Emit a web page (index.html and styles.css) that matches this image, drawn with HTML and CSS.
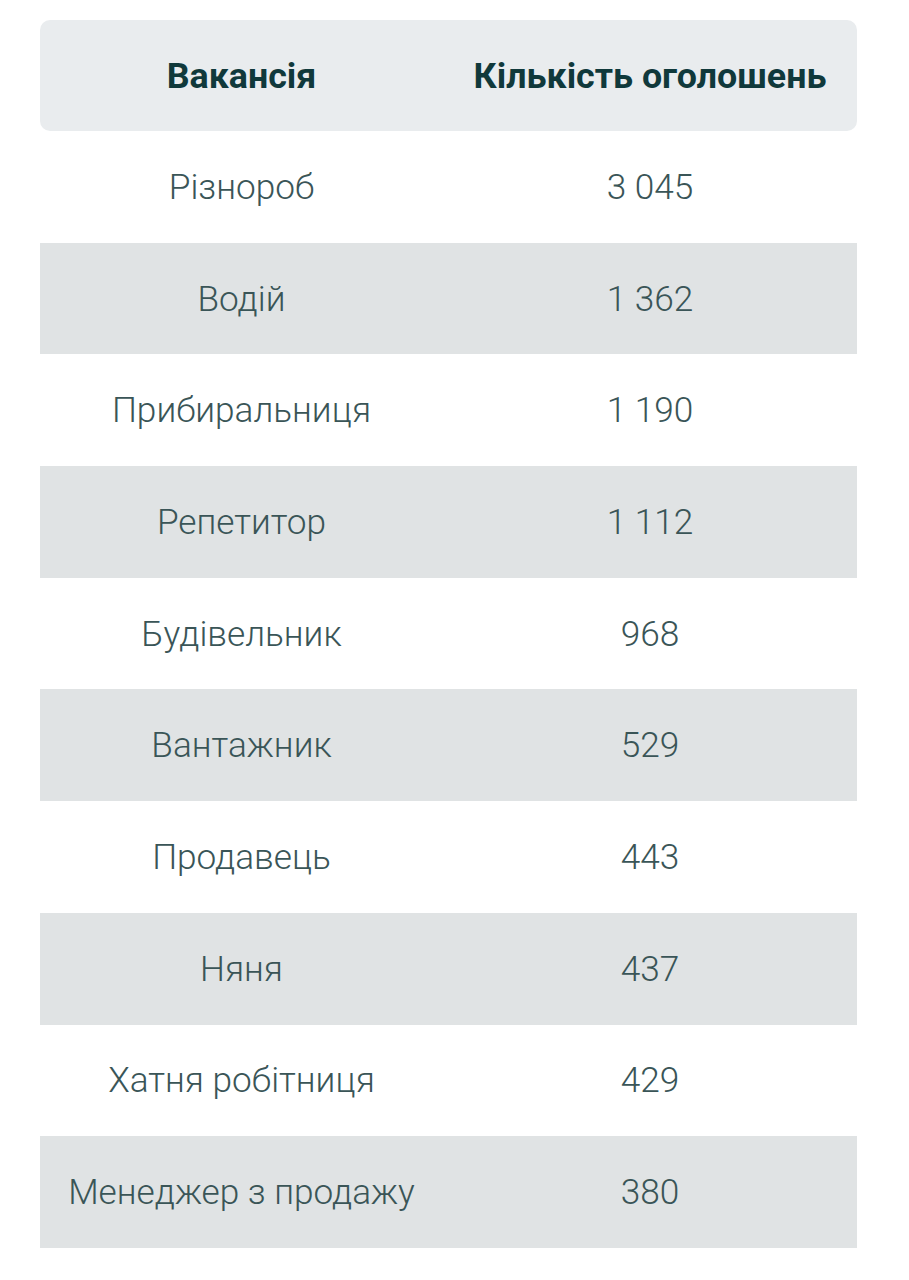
FILE: index.html
```html
<!DOCTYPE html>
<html lang="uk">
<head>
<meta charset="utf-8">
<link rel="stylesheet" href="styles.css">
</head>
<body>
<div class="table">
  <div class="row head"><div class="c1">Вакансія</div><div class="c2">Кількість оголошень</div></div>
  <div class="row"><div class="c1">Різнороб</div><div class="c2">3 045</div></div>
  <div class="row alt"><div class="c1">Водій</div><div class="c2">1 362</div></div>
  <div class="row"><div class="c1">Прибиральниця</div><div class="c2">1 190</div></div>
  <div class="row alt"><div class="c1">Репетитор</div><div class="c2">1 112</div></div>
  <div class="row"><div class="c1">Будівельник</div><div class="c2">968</div></div>
  <div class="row alt"><div class="c1">Вантажник</div><div class="c2">529</div></div>
  <div class="row"><div class="c1">Продавець</div><div class="c2">443</div></div>
  <div class="row alt"><div class="c1">Няня</div><div class="c2">437</div></div>
  <div class="row"><div class="c1">Хатня робітниця</div><div class="c2">429</div></div>
  <div class="row alt"><div class="c1">Менеджер з продажу</div><div class="c2">380</div></div>
</div>
</body>
</html>
```
FILE: styles.css
```css
html, body {
  margin: 0;
  padding: 0;
  background: #ffffff;
}
body {
  padding: 20px 52px 0 40px;
  font-family: Roboto, "Liberation Sans", sans-serif;
}
.table {
  width: 817px;
  display: flex;
  flex-direction: column;
}
.row {
  display: grid;
  grid-template-columns: 403px 1fr;
  height: 111.7px;
  align-items: center;
  color: #3a5557;
  font-size: 35.2px;
  font-weight: 300;
}
.row .c1, .row .c2 {
  text-align: center;
}
.row.alt {
  background: #e0e3e4;
}
.row.head {
  height: 111px;
  background: #e9ecee;
  border-radius: 10px;
  color: #10393b;
  font-weight: 700;
  font-size: 35.8px;
}
```
